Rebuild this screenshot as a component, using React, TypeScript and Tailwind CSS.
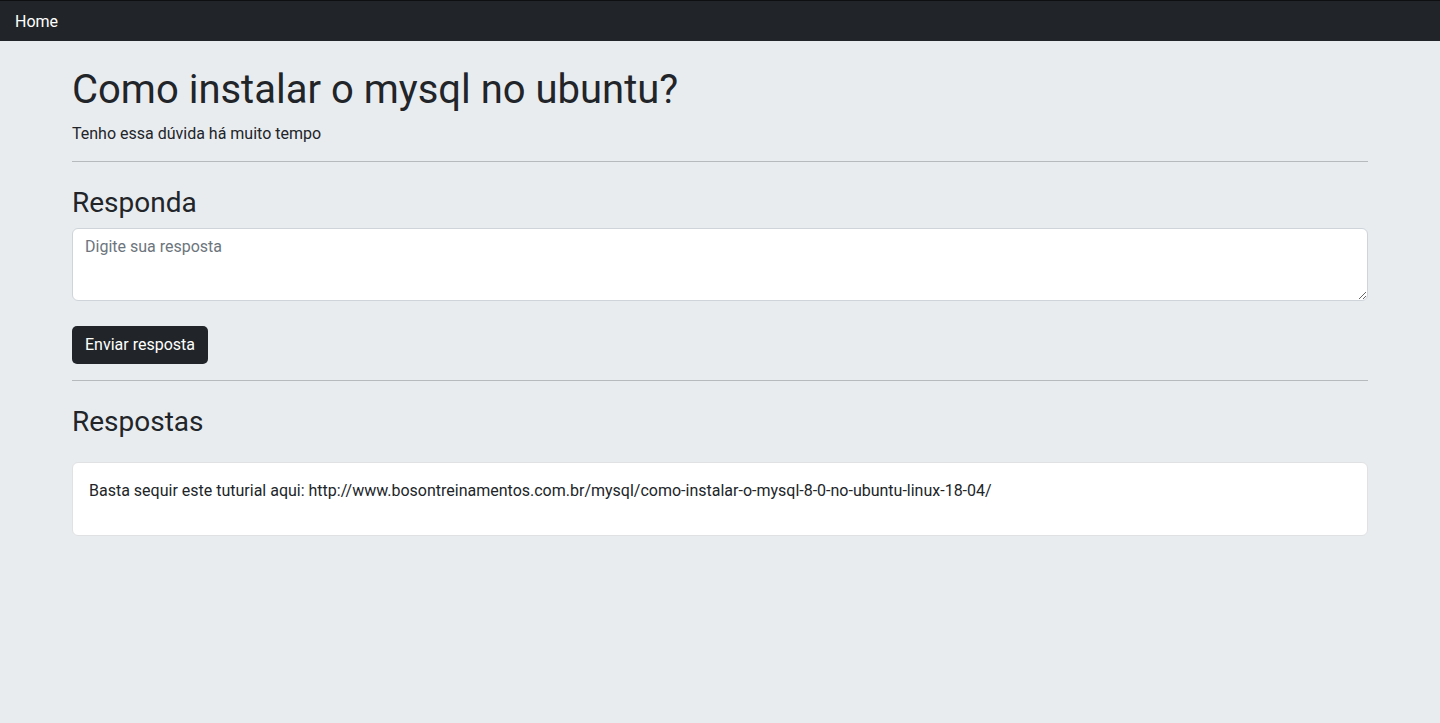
import { useState } from "react";

export default function App() {
  const [resposta, setResposta] = useState("");

  return (
    <div className="min-h-screen bg-[#e9ecef] font-['Roboto',sans-serif] text-[#212529]">
      <nav className="h-[41px] bg-[#212529] border-t border-t-[#0d0f10] flex items-center pt-[2px] px-[15px]">
        <a href="#" className="text-white text-[16px] leading-6">
          Home
        </a>
      </nav>

      <main className="max-w-[1320px] mx-auto px-3">
        <h1 className="mt-[25px] mb-2 text-[40px] leading-[48px] font-normal">
          Como instalar o mysql no ubuntu?
        </h1>
        <p className="text-[16px] leading-6">Tenho essa dúvida há muito tempo</p>
        <hr className="mt-[15px] mb-6 border-0 border-t border-t-[#b7babd]" />

        <h3 className="mb-2 text-[28px] leading-[33.6px] font-normal">Responda</h3>
        <textarea
          placeholder="Digite sua resposta"
          value={resposta}
          onChange={(e) => setResposta(e.target.value)}
          className="block w-full h-[73px] bg-white border border-[#ced4da] rounded-[6px] px-3 py-[6px] text-[16px] leading-6 placeholder:text-[#6c757d] outline-none"
        />
        <button className="mt-[25px] h-[38px] px-[13px] bg-[#212529] text-white text-[16px] leading-6 rounded-[5px]">
          Enviar resposta
        </button>
        <hr className="mt-4 mb-6 border-0 border-t border-t-[#b7babd]" />

        <h3 className="mb-6 text-[28px] leading-[33.6px] font-normal">Respostas</h3>
        <div className="bg-white border border-[#dfe1e3] rounded-[6px] px-4 pt-4 pb-4">
          <p className="text-[16px] leading-6 mb-4">
            Basta sequir este tuturial aqui: http://www.bosontreinamentos.com.br/mysql/como-instalar-o-mysql-8-0-no-ubuntu-linux-18-04/
          </p>
        </div>
      </main>
    </div>
  );
}
